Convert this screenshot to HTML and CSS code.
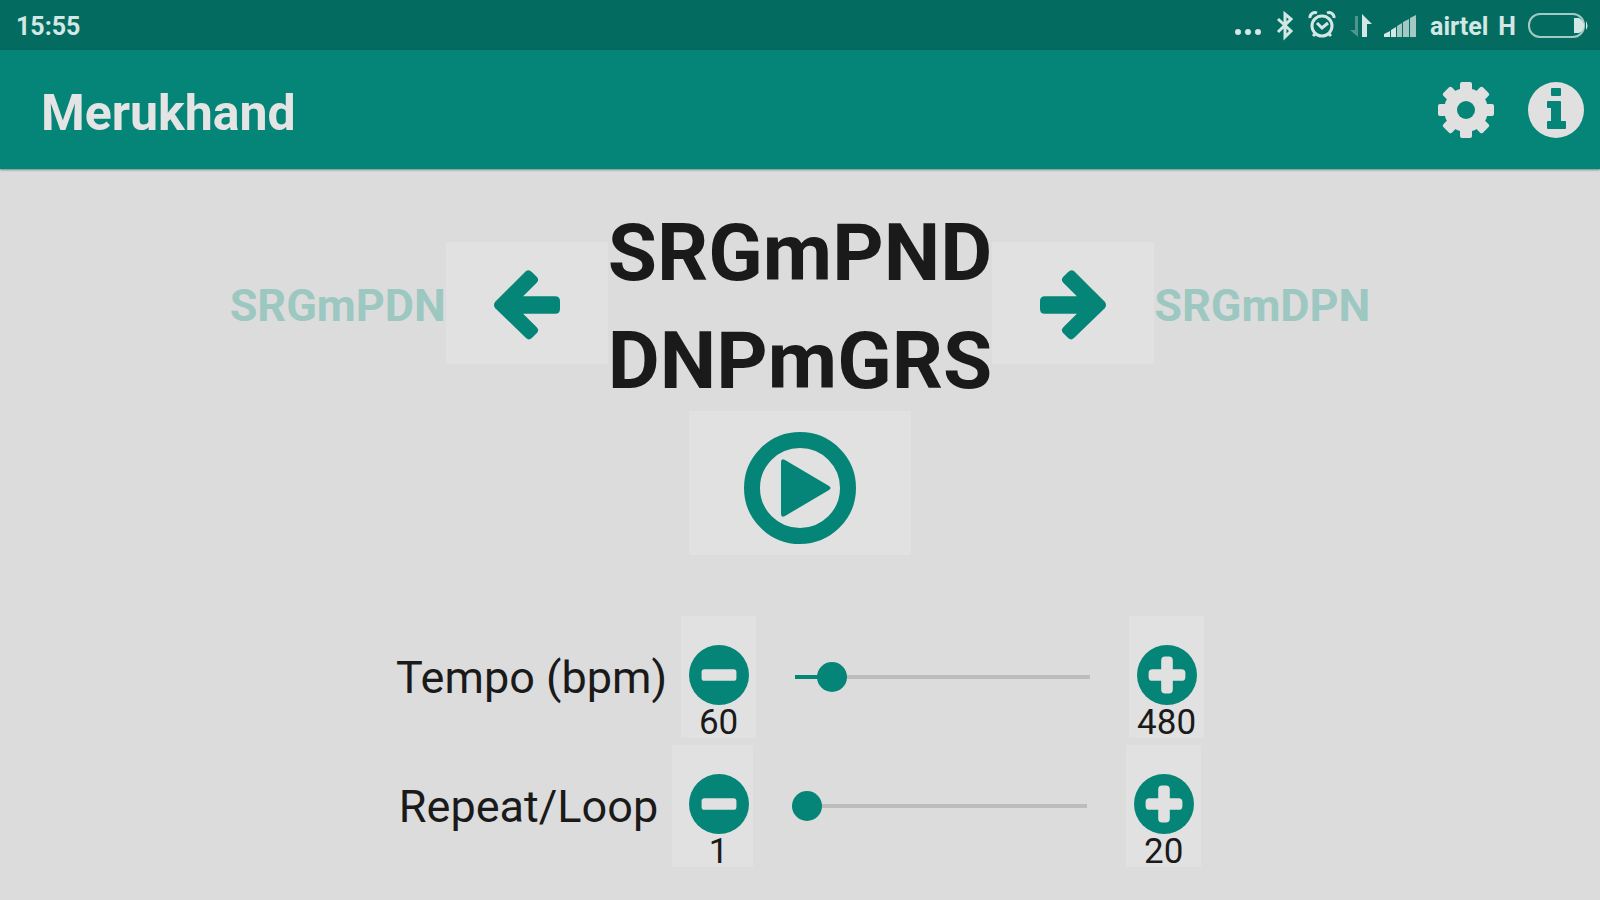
FILE: index.html
```html
<!DOCTYPE html>
<html lang="en">
<head>
  <meta charset="UTF-8" />
  <meta name="viewport" content="width=device-width, initial-scale=1.0"/>
  <title>Merukhand</title>
  <link rel="stylesheet" href="styles.css">
</head>
<body>
  <div class="status-bar">
    <span class="clock">15:55</span>
    <div class="status-icons">
      <svg class="dots" width="28" height="36" viewBox="0 0 28 36"><circle cx="4" cy="24" r="3"/><circle cx="14" cy="24" r="3"/><circle cx="24" cy="24" r="3"/></svg>
      <svg class="bluetooth" width="18" height="36" viewBox="0 0 18 36"><path d="M2 11l13 12-6 6V6l6 5L2 24"/></svg>
      <svg class="alarm" width="28" height="36" viewBox="0 0 28 36"><circle cx="14" cy="18" r="10"/><path d="M9 15l5 5 6-5M2 10a5 5 0 0 1 7-5M26 10a5 5 0 0 0-7-5M7 26l-2 2M21 26l2 2"/></svg>
      <svg class="data" width="22" height="36" viewBox="0 0 22 36"><path class="dim" d="M5 8h3v21L0 22h5z"/><path d="M12 29V6l10 10h-5v13z"/></svg>
      <svg class="signal" width="32" height="36" viewBox="0 0 32 36"><path d="M0 29v-3l6-3v6zM7 29v-7l5-3v10z"/><path class="mid" d="M13 29V18l5-3v14zM19 29V14l6-3v18zM26 29V10l6-3v22z"/></svg>
      <span class="carrier">airtel</span>
      <span class="network">H</span>
      <svg class="battery" width="62" height="36" viewBox="0 0 62 36"><rect x="2" y="6" width="55" height="23" rx="11"/><path d="M47 10h5q5 3 5 8t-5 7h-5zM59 13q3 5 0 9z"/></svg>
    </div>
  </div>

  <header class="app-bar">
    <h1>Merukhand</h1>
    <div class="actions">
      <button class="icon-btn" aria-label="Settings">
        <svg width="58" height="58" viewBox="-29 -29 58 58">
          <rect x="-6" y="-28" width="12" height="56" rx="2"/>
          <rect x="-6" y="-28" width="12" height="56" rx="2" transform="rotate(45)"/>
          <rect x="-6" y="-28" width="12" height="56" rx="2" transform="rotate(90)"/>
          <rect x="-6" y="-28" width="12" height="56" rx="2" transform="rotate(135)"/>
          <circle r="22"/>
          <circle class="hole" r="9"/>
        </svg>
      </button>
      <button class="icon-btn" aria-label="Info">
        <svg width="58" height="58" viewBox="-29 -29 58 58">
          <circle r="28"/>
          <path class="hole" d="M-4-22h8q1 0 1 1v6q0 1-1 1h-8q-1 0-1-1v-6q0-1 1-1zM-8-9H4q1 0 1 1V11h4q1 0 1 1v6q0 1-1 1H-8q-1 0-1-1v-6q0-1 1-1h3V-2h-3q-1 0-1-1v-5q0-1 1-1z"/>
        </svg>
      </button>
    </div>
  </header>

  <main>
    <section class="pattern">
      <span class="neighbour">SRGmPDN</span>
      <button class="tile arrow" aria-label="Previous">
        <svg width="66" height="70" viewBox="0 0 68 72"><path d="M33 1q3-2 6 1l5 5q3 3 0 6L30 27h33q5 0 5 5v8q0 5-5 5H30l14 14q3 3 0 6l-5 5q-3 3-6 0L1 39q-2-3 0-6z"/></svg>
      </button>
      <div class="current">
        <div>SRGmPND</div>
        <div>DNPmGRS</div>
      </div>
      <button class="tile arrow next" aria-label="Next">
        <svg width="66" height="70" viewBox="0 0 68 72"><path d="M33 1q3-2 6 1l5 5q3 3 0 6L30 27h33q5 0 5 5v8q0 5-5 5H30l14 14q3 3 0 6l-5 5q-3 3-6 0L1 39q-2-3 0-6z"/></svg>
      </button>
      <span class="neighbour">SRGmDPN</span>
    </section>

    <button class="tile play" aria-label="Play">
      <svg width="112" height="112" viewBox="0 0 112 112"><circle cx="56" cy="56" r="48"/><path d="M37 30q0-4 4-2l44 26q3 2 0 4L41 84q-4 2-4-2z"/></svg>
    </button>

    <section class="controls">
      <div class="control">
        <label for="tempo">Tempo (bpm)</label>
        <button class="tile step" aria-label="Decrease tempo">
          <svg width="60" height="60" viewBox="0 0 62 62"><circle cx="31" cy="31" r="31"/><rect x="13" y="25" width="36" height="12" rx="3"/></svg>
          <span>60</span>
        </button>
        <input type="range" id="tempo" min="60" max="480" value="94" style="--fill: 8%">
        <button class="tile step" aria-label="Increase tempo">
          <svg width="60" height="60" viewBox="0 0 62 62"><circle cx="31" cy="31" r="31"/><rect x="12" y="25" width="38" height="12" rx="4"/><rect x="25" y="12" width="12" height="38" rx="4"/></svg>
          <span>480</span>
        </button>
      </div>
      <div class="control">
        <label for="repeat">Repeat/Loop</label>
        <button class="tile step wide" aria-label="Decrease repeat">
          <svg width="60" height="60" viewBox="0 0 62 62"><circle cx="31" cy="31" r="31"/><rect x="13" y="25" width="36" height="12" rx="3"/></svg>
          <span>1</span>
        </button>
        <input type="range" id="repeat" min="1" max="20" value="1" style="--fill: 0%">
        <button class="tile step" aria-label="Increase repeat">
          <svg width="60" height="60" viewBox="0 0 62 62"><circle cx="31" cy="31" r="31"/><rect x="12" y="25" width="38" height="12" rx="4"/><rect x="25" y="12" width="12" height="38" rx="4"/></svg>
          <span>20</span>
        </button>
      </div>
    </section>
  </main>

  <script>
    document.querySelectorAll('input[type=range]').forEach((slider) => {
      slider.addEventListener('input', () => {
        const fill = (slider.value - slider.min) / (slider.max - slider.min) * 100;
        slider.style.setProperty('--fill', fill + '%');
      });
    });
  </script>
</body>
</html>
```
FILE: styles.css
```css
* {
  box-sizing: border-box;
}

body {
  margin: 0;
  min-height: 100vh;
  font-family: Roboto, sans-serif;
  background: #dcdcdc;
  color: #1a1a1a;
}

button {
  padding: 0;
  border: none;
  background: none;
  font-family: inherit;
  color: inherit;
  cursor: pointer;
}

svg {
  display: block;
  flex-shrink: 0;
}

/* Status bar */
.status-bar {
  display: flex;
  justify-content: space-between;
  align-items: center;
  height: 50px;
  padding: 2px 11px 0 16px;
  background: #046b61;
  color: #d3e8e4;
  font-size: 25px;
  font-weight: 700;
}

.status-icons {
  display: flex;
  align-items: center;
}

.status-icons svg {
  fill: #d3e8e4;
}

.dots {
  margin-right: 14px;
}

.status-icons .bluetooth {
  margin-right: 14px;
  fill: none;
  stroke: #d3e8e4;
  stroke-width: 3;
}

.status-icons .alarm {
  margin-right: 14px;
  fill: none;
  stroke: #d3e8e4;
  stroke-width: 3;
}

.data {
  margin-right: 12px;
}

.data .dim {
  fill: #4d968d;
}

.signal {
  margin-right: 14px;
}

.signal .mid {
  fill: #a3c9c4;
}

.carrier {
  margin-right: 10px;
}

.network {
  margin-right: 11px;
}

.battery rect {
  fill: none;
  stroke: #a3c9c4;
  stroke-width: 2;
}

/* App bar */
.app-bar {
  display: flex;
  justify-content: space-between;
  align-items: center;
  height: 119px;
  padding: 0 15px 0 41px;
  background: #048577;
  box-shadow: 0 1px 2px rgba(0, 60, 60, 0.5);
}

h1 {
  margin: 0;
  padding-top: 6px;
  font-size: 50px;
  font-weight: 700;
  color: #e4e4e4;
}

.actions {
  display: flex;
  gap: 32px;
}

.icon-btn svg {
  fill: #e0e0e0;
}

.icon-btn .hole {
  fill: #048577;
}

/* Pattern */
main {
  display: flex;
  flex-direction: column;
  align-items: center;
  padding-top: 26px;
}

.tile {
  background: #e1e1e1;
}

.pattern {
  display: flex;
  justify-content: center;
  align-items: center;
}

.neighbour {
  padding-top: 4px;
  font-size: 45px;
  font-weight: 700;
  color: #9cc8c1;
}

.arrow {
  display: flex;
  justify-content: center;
  align-items: center;
  width: 162px;
  height: 122px;
  padding-top: 4px;
}

.arrow svg {
  fill: #048577;
}

.next svg {
  transform: scaleX(-1);
}

.current {
  margin: 4px 0 -4px;
  font-size: 80px;
  font-weight: 700;
  line-height: 108px;
}

.play {
  display: flex;
  justify-content: center;
  align-items: center;
  width: 222px;
  height: 144px;
  padding-top: 10px;
}

.play path {
  fill: #048577;
}

.play circle {
  fill: none;
  stroke: #048577;
  stroke-width: 16;
}

/* Sliders */
.controls {
  display: flex;
  flex-direction: column;
  align-items: center;
  gap: 7px;
  margin-top: 61px;
}

.control {
  display: flex;
  align-items: center;
}

.control label {
  margin-right: 14px;
  font-size: 45px;
}

.step {
  display: flex;
  flex-direction: column;
  align-items: center;
  width: 75px;
  height: 122px;
  padding-top: 29px;
  font-size: 35px;
  line-height: 36px;
}

.wide {
  width: 81px;
  padding-left: 12px;
}

.step circle {
  fill: #048577;
}

.step rect {
  fill: #e1e1e1;
}

input[type=range] {
  appearance: none;
  width: 295px;
  height: 30px;
  margin: 0 39px;
  background: linear-gradient(to right, #048577 var(--fill), #bcbcbc var(--fill)) center / 100% 4px no-repeat;
}

input[type=range]::-webkit-slider-thumb {
  appearance: none;
  width: 30px;
  height: 30px;
  border-radius: 50%;
  background: #048577;
}
```
